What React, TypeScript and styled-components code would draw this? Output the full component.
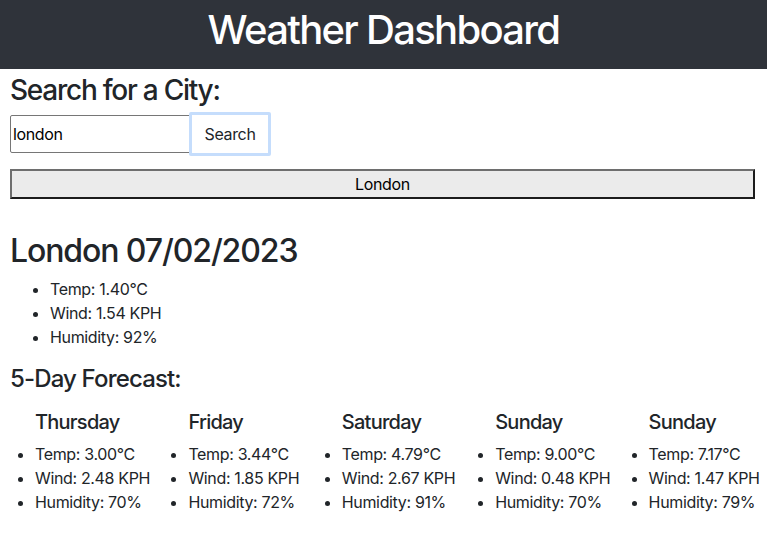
import React from "react";
import styled, { createGlobalStyle } from "styled-components";

const GlobalStyle = createGlobalStyle`
  html, body {
    margin: 0;
    padding: 0;
    background: #ffffff;
  }
  body {
    font-family: Inter, "Liberation Sans", Arial, sans-serif;
    font-size: 16px;
    line-height: 1.5;
    letter-spacing: -0.35px;
    color: #212529;
  }
  * { box-sizing: border-box; }
`;

const Header = styled.header`
  background: #2f333a;
  color: #ffffff;
  text-align: center;
  height: 69px;
  padding-top: 6px;
`;

const Title = styled.h1`
  margin: 0;
  font-size: 40px;
  font-weight: 500;
  line-height: 1.2;
  letter-spacing: -1.7px;
`;

const Main = styled.main`
  padding: 0 10px;
`;

const SearchTitle = styled.h3`
  margin: 5px 0 4px;
  font-size: 28px;
  font-weight: 500;
  line-height: 1.2;
  letter-spacing: -1.25px;
`;

const SearchRow = styled.form`
  display: flex;
  align-items: center;
  height: 44px;
`;

const CityInput = styled.input`
  width: 182px;
  height: 38px;
  border: 1px solid #767676;
  border-radius: 2px;
  padding: 0 2px;
  font-family: inherit;
  font-size: 16px;
  letter-spacing: -0.35px;
  color: #000;
  outline: none;
`;

const SearchButton = styled.button`
  width: 82px;
  height: 44px;
  margin-left: -3px;
  background: #ffffff;
  border: 3px solid #c5ddfc;
  border-radius: 2px;
  font-family: inherit;
  font-size: 16px;
  letter-spacing: -0.35px;
  color: #212529;
  padding: 0;
`;

const HistoryButton = styled.button`
  display: block;
  width: 745px;
  height: 30px;
  margin-top: 13px;
  background: #ebebeb;
  border-style: solid;
  border-width: 2px;
  border-color: #6e6e6e #1c1c1c #1c1c1c #6e6e6e;
  font-family: inherit;
  font-size: 16px;
  letter-spacing: -0.35px;
  color: #000;
  padding: 0;
`;

const CityTitle = styled.h2`
  margin: 33px 0 7px;
  font-size: 32px;
  font-weight: 500;
  line-height: 1.2;
  letter-spacing: -1.1px;
`;

const StatList = styled.ul`
  margin: 0 0 16px;
  padding-left: 40px;
  line-height: 24px;
`;

const ForecastTitle = styled.h4`
  margin: 0 0 8px;
  font-size: 24px;
  font-weight: 500;
  line-height: 1.2;
  letter-spacing: -0.85px;
`;

const ForecastGrid = styled.div`
  display: grid;
  grid-template-columns: repeat(5, 1fr);
  margin: 0 -10px;
  padding-top: 8px;
`;

const DayCard = styled.div`
  padding-left: 35px;
`;

const DayName = styled.h5`
  margin: 0 0 8px;
  font-size: 20px;
  font-weight: 500;
  line-height: 1.2;
  letter-spacing: -0.75px;
`;

const DayList = styled.ul`
  margin: 0;
  padding-left: 0;
  line-height: 24px;
  white-space: nowrap;
`;

const forecast = [
  { day: "Thursday", temp: "3.00", wind: "2.48", hum: "70" },
  { day: "Friday", temp: "3.44", wind: "1.85", hum: "72" },
  { day: "Saturday", temp: "4.79", wind: "2.67", hum: "91" },
  { day: "Sunday", temp: "9.00", wind: "0.48", hum: "70" },
  { day: "Sunday", temp: "7.17", wind: "1.47", hum: "79" },
];

export default function App() {
  return (
    <>
      <GlobalStyle />
      <Header>
        <Title>Weather Dashboard</Title>
      </Header>
      <Main>
        <SearchTitle>Search for a City:</SearchTitle>
        <SearchRow onSubmit={(e) => e.preventDefault()}>
          <CityInput defaultValue="london" />
          <SearchButton type="submit">Search</SearchButton>
        </SearchRow>
        <HistoryButton type="button">London</HistoryButton>
        <CityTitle>London 07/02/2023</CityTitle>
        <StatList>
          <li>Temp: 1.40°C</li>
          <li>Wind: 1.54 KPH</li>
          <li>Humidity: 92%</li>
        </StatList>
        <ForecastTitle>5-Day Forecast:</ForecastTitle>
        <ForecastGrid>
          {forecast.map((f, i) => (
            <DayCard key={i}>
              <DayName>{f.day}</DayName>
              <DayList>
                <li>Temp: {f.temp}°C</li>
                <li>Wind: {f.wind} KPH</li>
                <li>Humidity: {f.hum}%</li>
              </DayList>
            </DayCard>
          ))}
        </ForecastGrid>
      </Main>
    </>
  );
}
